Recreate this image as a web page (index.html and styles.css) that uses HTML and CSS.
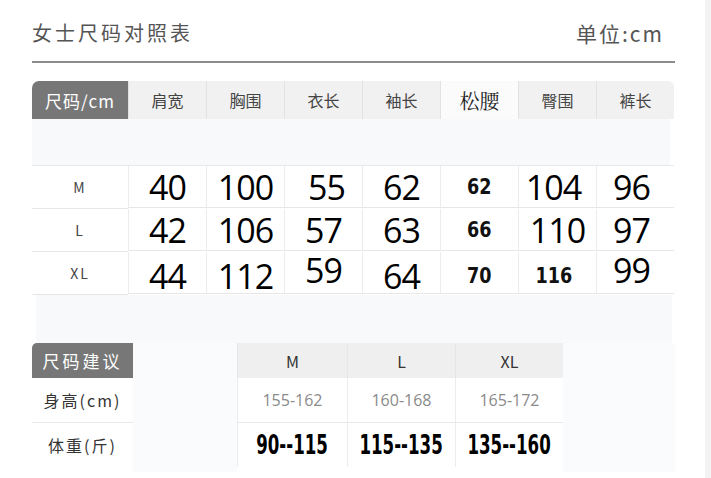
FILE: index.html
```html
<!DOCTYPE html>
<html lang="zh">
<head>
<meta charset="utf-8">
<link rel="stylesheet" href="styles.css">
</head>
<body>
<div class="page">
  <div class="top">
    <div class="title">女士尺码对照表</div>
    <div class="unit">单位:cm</div>
  </div>
  <div class="rule"></div>

  <div class="chart">
    <div class="hcell dark">尺码/cm</div>
    <div class="hcell">肩宽</div>
    <div class="hcell">胸围</div>
    <div class="hcell">衣长</div>
    <div class="hcell">袖长</div>
    <div class="hcell serif">松腰</div>
    <div class="hcell">臀围</div>
    <div class="hcell last">裤长</div>
  </div>
  <div class="band"></div>
  <div class="chart body">
    <div class="lab">M</div>
    <div class="v">40</div>
    <div class="v">100</div>
    <div class="v r3">55</div>
    <div class="v">62</div>
    <div class="v"><span class="cond">62</span></div>
    <div class="v l4">104</div>
    <div class="v l4">96</div>

    <div class="lab">L</div>
    <div class="v">42</div>
    <div class="v">106</div>
    <div class="v">57</div>
    <div class="v">63</div>
    <div class="v"><span class="cond">66</span></div>
    <div class="v">110</div>
    <div class="v l4">97</div>

    <div class="lab">XL</div>
    <div class="v low">44</div>
    <div class="v low">112</div>
    <div class="v high">59</div>
    <div class="v low">64</div>
    <div class="v low"><span class="cond">70</span></div>
    <div class="v low l4"><span class="cond">116</span></div>
    <div class="v high l4">99</div>
  </div>
  <div class="band band2"></div>

  <div class="rec">
    <div class="rdark">尺码建议</div>
    <div class="blank col2"></div>
    <div class="rh">M</div>
    <div class="rh">L</div>
    <div class="rh">XL</div>
    <div class="blank col6"></div>

    <div class="rlab">身高(cm)</div>
    <div class="hv">155-162</div>
    <div class="hv">160-168</div>
    <div class="hv">165-172</div>

    <div class="rlab last">体重(斤)</div>
    <div class="wv"><span class="wcond">90--115</span></div>
    <div class="wv"><span class="wcond">115--135</span></div>
    <div class="wv"><span class="wcond">135--160</span></div>
  </div>
</div>
<div class="strip"></div>
</body>
</html>
```

FILE: styles.css
```css
html, body {
  margin: 0;
  padding: 0;
  background: #ffffff;
}
body {
  width: 711px;
  height: 478px;
  overflow: hidden;
  display: flex;
  font-family: "Noto Sans CJK SC", "Noto Sans", sans-serif;
}
.page {
  width: 705px;
  padding-left: 32px;
  box-sizing: border-box;
}
.strip {
  width: 6px;
  background: #f3f3f3;
}
.top {
  display: flex;
  justify-content: space-between;
  align-items: center;
  width: 632px;
  height: 61px;
  padding-top: 4px;
  box-sizing: border-box;
}
.title {
  font-size: 20px;
  letter-spacing: 3px;
  color: #555;
}
.unit {
  font-size: 21px;
  letter-spacing: 2px;
  color: #555;
}
.rule {
  width: 643px;
  height: 2px;
  background: #8c8c8c;
}
.chart {
  margin-top: 18px;
  display: grid;
  grid-template-columns: 96px repeat(7, 78px);
  width: 642px;
}
.hcell {
  height: 38px;
  display: flex;
  align-items: center;
  justify-content: center;
  background: #f1f1f1;
  color: #444;
  font-size: 16px;
  border-left: 1px solid #e2e2e2;
}
.hcell.dark {
  background: #777777;
  color: #fff;
  font-size: 17px;
  letter-spacing: 1px;
  border-left: none;
  border-top-left-radius: 7px;
}
.hcell.serif {
  background: #fbfbfc;
  color: #222;
  font-family: "Noto Serif CJK SC", "Noto Serif", serif;
  font-size: 20px;
}
.hcell.last {
  border-top-right-radius: 6px;
}
.band {
  width: 638px;
  height: 46px;
  background: #f8f9fb;
}
.band2 {
  margin-left: 4px;
  height: 48px;
  width: 636px;
}
.chart.body {
  margin-top: 0;
  border-top: 1px solid #e8e8e8;
}
.lab {
  height: 42px;
  display: flex;
  align-items: center;
  justify-content: center;
  font-size: 14px;
  letter-spacing: 2px;
  color: #444;
  border-bottom: 1px solid #e6e6e6;
}
.v {
  height: 42px;
  display: flex;
  align-items: center;
  justify-content: center;
  font-family: "Open Sans", "Noto Sans", sans-serif;
  font-size: 34px;
  line-height: 34px;
  letter-spacing: -1px;
  color: #000;
  background: #fff;
  border-left: 1px solid #ececec;
  border-bottom: 1px solid #e6e6e6;
  box-sizing: border-box;
}
.cond {
  display: inline-block;
  font-family: "DejaVu Sans", sans-serif;
  font-weight: bold;
  font-size: 22px;
  line-height: 22px;
  letter-spacing: 0;
  color: #111;
  transform: scaleX(0.8);
}
.v.low { padding-top: 7px; }
.v.high { padding-bottom: 5px; }
.v.r3 { padding-left: 6px; }
.v.l4 { padding-right: 8px; }

.rec {
  display: grid;
  grid-template-columns: 101px 104px 110px 108px 108px 112px;
  grid-template-rows: 35px 45px 44px;
  width: 643px;
}
.rdark {
  background: #777777;
  color: #fff;
  font-size: 17px;
  letter-spacing: 3px;
  display: flex;
  align-items: center;
  justify-content: center;
  border-top-left-radius: 5px;
}
.blank {
  grid-row: 1 / 4;
  background: #fafbfd;
  height: 129px;
}
.col2 { grid-column: 2; }
.col6 { grid-column: 6; }
.rh {
  background: #efefef;
  display: flex;
  align-items: center;
  justify-content: center;
  font-size: 16px;
  color: #333;
  border-left: 1px solid #e6e6e6;
}
.rlab {
  grid-column: 1;
  display: flex;
  align-items: center;
  justify-content: center;
  font-size: 16px;
  letter-spacing: 2px;
  color: #333;
  border-bottom: 1px solid #e8e8e8;
}
.rlab.last { border-bottom: none; }
.hv {
  display: flex;
  align-items: center;
  justify-content: center;
  font-family: "Open Sans", "Noto Sans", sans-serif;
  font-size: 16px;
  color: #8a8a8a;
  border-left: 1px solid #ececec;
  border-bottom: 1px solid #e8e8e8;
}
.wv {
  display: flex;
  align-items: center;
  justify-content: center;
  white-space: nowrap;
  border-left: 1px solid #ececec;
}
.wcond {
  display: inline-block;
  font-family: "DejaVu Sans", sans-serif;
  font-weight: bold;
  font-size: 26px;
  line-height: 1;
  color: #000;
  transform: scaleX(0.64);
}
```
